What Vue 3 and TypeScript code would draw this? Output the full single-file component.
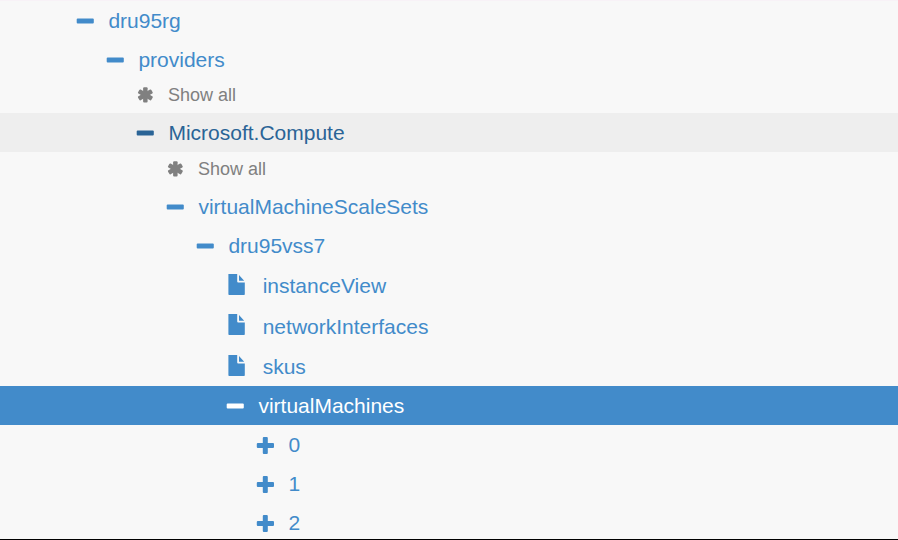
<script setup lang="ts">
type Kind = 'minus' | 'plus' | 'file' | 'all'
interface Row {
  label: string
  kind: Kind
  depth: number
  height: number
  state?: 'hover' | 'selected'
}

const rows: Row[] = [
  { label: 'dru95rg', kind: 'minus', depth: 0, height: 39 },
  { label: 'providers', kind: 'minus', depth: 1, height: 39 },
  { label: 'Show all', kind: 'all', depth: 2, height: 34 },
  { label: 'Microsoft.Compute', kind: 'minus', depth: 2, height: 39, state: 'hover' },
  { label: 'Show all', kind: 'all', depth: 3, height: 35 },
  { label: 'virtualMachineScaleSets', kind: 'minus', depth: 3, height: 39 },
  { label: 'dru95vss7', kind: 'minus', depth: 4, height: 39 },
  { label: 'instanceView', kind: 'file', depth: 5, height: 41 },
  { label: 'networkInterfaces', kind: 'file', depth: 5, height: 40 },
  { label: 'skus', kind: 'file', depth: 5, height: 40 },
  { label: 'virtualMachines', kind: 'minus', depth: 5, height: 39, state: 'selected' },
  { label: '0', kind: 'plus', depth: 6, height: 39 },
  { label: '1', kind: 'plus', depth: 6, height: 39 },
  { label: '2', kind: 'plus', depth: 6, height: 36 },
]
</script>

<template>
  <main class="panel">
    <ul class="tree">
      <li
        v-for="(row, i) in rows"
        :key="i"
        class="row"
        :class="[row.kind, row.state]"
        :style="{ height: row.height + 'px', paddingLeft: 76 + row.depth * 30 + 'px' }"
      >
        <svg class="icon" width="20" height="22" viewBox="0 0 20 22" aria-hidden="true">
          <rect v-if="row.kind === 'minus'" x="0.7" y="8.5" width="17.1" height="5" rx="1" />
          <path
            v-else-if="row.kind === 'plus'"
            d="M7.8 3h3q1 0 1 1V9H17q1 0 1 1v3q0 1-1 1h-5.2v5q0 1-1 1H7.8q-1 0-1-1v-5H1.8q-1 0-1-1v-3q0-1 1-1h5v-5q0-1 1-1Z"
          />
          <path
            v-else-if="row.kind === 'file'"
            d="M2.4 0H11.2V7.4Q11.2 8.4 12.2 8.4H18.8V20.2Q18.8 21 18 21H3.2Q2.4 21 2.4 20.2ZM13 1.1L18.2 6.8H13Z"
          />
          <g v-else>
            <rect v-for="a in [0, 60, 120]" :key="a" x="7.1" y="3.2" width="4.5" height="15.4" rx="1" :transform="`rotate(${a} 9.35 10.9)`" />
          </g>
        </svg>
        <span class="label">{{ row.label }}</span>
      </li>
    </ul>
  </main>
</template>

<style>
body {
  margin: 0;
  background: #f8f8f8;
}
</style>

<style scoped>
.panel {
  box-sizing: border-box;
  height: 540px;
  overflow: hidden;
  border-top: 1px solid #f8f2f7;
  border-bottom: 1px solid #000;
  background: #f8f8f8;
  font-family: "Liberation Sans", Arial, sans-serif;
}
.tree {
  margin: 0;
  padding: 0;
  list-style: none;
}
.row {
  box-sizing: border-box;
  display: flex;
  align-items: flex-start;
  color: #428bca;
  font-size: 21px;
  line-height: 39px;
  white-space: nowrap;
}
.icon {
  flex: none;
  margin: 9px 12.4px 0 0;
  fill: currentColor;
}
.hover {
  background: #eee;
  color: #2a6496;
}
.selected {
  background: #428bca;
  color: #fff;
}
.all {
  color: #808080;
  font-size: 18px;
  line-height: 33px;
}
.all .icon {
  margin: 5px 12px 0 0;
}
.hover + .all {
  padding-top: 1px;
}
.file {
  line-height: 42px;
}
.file .icon {
  margin: 9px 15px 0 0;
}
.file + .file:not(:has(+ .selected)) .icon {
  margin-top: 8px;
}
.file .label {
  margin-left: 1.7px;
}
</style>
